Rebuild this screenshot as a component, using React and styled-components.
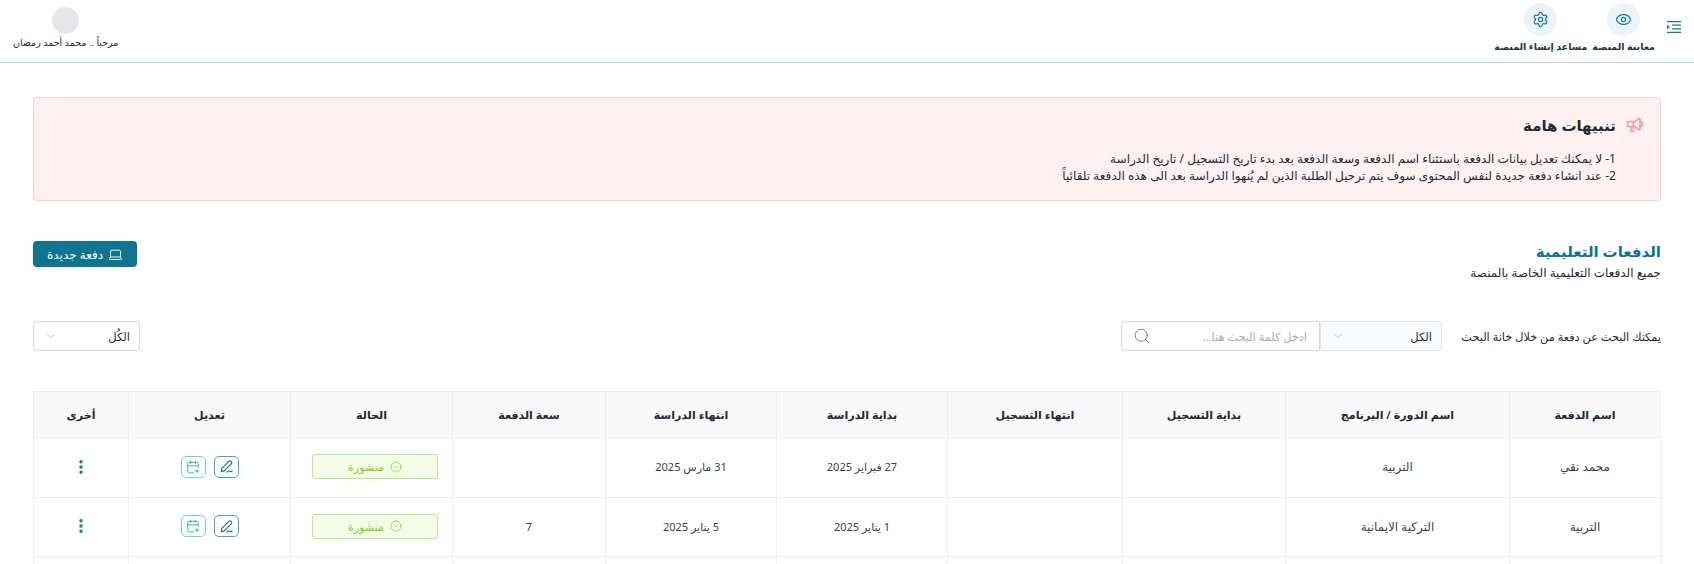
import React from "react";
import styled, { createGlobalStyle } from "styled-components";
import { Eye, Settings, Laptop, ChevronDown, Search, CalendarPlus, CircleCheck, EllipsisVertical } from "lucide-react";
import { TbSpeakerphone } from "react-icons/tb";

const GlobalStyle = createGlobalStyle`
  html, body {
    margin: 0;
    height: 564px;
    overflow: hidden;
    background: #fff;
  }
  body {
    direction: rtl;
    font-family: "Noto Sans", "DejaVu Sans", "Liberation Sans", sans-serif;
    color: #1f2937;
  }
`;

const columns = [
  { title: "اسم الدفعة", width: 151 },
  { title: "اسم الدورة / البرنامج", width: 224 },
  { title: "بداية التسجيل", width: 163 },
  { title: "انتهاء التسجيل", width: 175 },
  { title: "بداية الدراسة", width: 171 },
  { title: "انتهاء الدراسة", width: 171 },
  { title: "سعة الدفعة", width: 153 },
  { title: "الحالة", width: 162 },
  { title: "تعديل", width: 162 },
  { title: "أخرى", width: 95 },
];

const rows = [
  { name: "محمد نقي", course: "التربية", start: "27 فبراير 2025", end: "31 مارس 2025", seats: "", height: 60 },
  { name: "التربية", course: "التركية الايمانية", start: "1 يناير 2025", end: "5 يناير 2025", seats: "7", height: 59 },
];

function PenIcon() {
  return (
    <svg width="15" height="15" viewBox="0 0 16 16" fill="none" stroke="currentColor" strokeWidth="1.3" strokeLinecap="round" strokeLinejoin="round">
      <path d="M2.5 13.5 3 10l7.2-7.2c1-1 2-1 2.8-.2s.8 1.8-.2 2.8L5.6 12.6z" />
      <path d="M8.5 14c1.2-1.4 2-1.6 2.8-.8.7.7 1.4.6 2.7-.4" />
    </svg>
  );
}

function App() {
  return (
    <>
      <GlobalStyle />
      <TopBar>
        <TopActions>
          <MenuIcon viewBox="0 0 14 12">
            <path d="M0 .6h14M5 4.2h9M5 7.8h9M0 11.4h14" />
            <path d="M0 3.8 3 6 0 8.2z" className="fill" />
          </MenuIcon>
          <TopAction>
            <IconCircle><Eye size={17} strokeWidth={1.7} /></IconCircle>
            <TopLabel>معاينة المنصة</TopLabel>
          </TopAction>
          <TopAction>
            <IconCircle><Settings size={17} strokeWidth={1.7} /></IconCircle>
            <TopLabel>مساعد إنشاء المنصة</TopLabel>
          </TopAction>
        </TopActions>
        <UserBox>
          <Avatar />
          <UserName>مرحباً .. محمد أحمد رمضان</UserName>
        </UserBox>
      </TopBar>

      <Main>
        <Alert>
          <AlertHead>
            <TbSpeakerphone size={20} color="#f0a0a3" />
            <AlertTitle>تنبيهات هامة</AlertTitle>
          </AlertHead>
          <AlertLine>1- لا يمكنك تعديل بيانات الدفعة باستثناء اسم الدفعة وسعة الدفعة بعد بدء تاريخ التسجيل / تاريخ الدراسة</AlertLine>
          <AlertLine>2- عند انشاء دفعة جديدة لنفس المحتوى سوف يتم ترحيل الطلبة الذين لم يُنهوا الدراسة بعد الى هذه الدفعة تلقائياً</AlertLine>
        </Alert>

        <SectionHead>
          <div>
            <SectionTitle>الدفعات التعليمية</SectionTitle>
            <SectionSub>جميع الدفعات التعليمية الخاصة بالمنصة</SectionSub>
          </div>
          <NewButton>
            <Laptop size={15} strokeWidth={1.5} />
            دفعة جديدة
          </NewButton>
        </SectionHead>

        <FilterRow>
          <SearchGroup>
            <FilterLabel>يمكنك البحث عن دفعة من خلال خانة البحث</FilterLabel>
            <ScopeSelect>
              <span>الكل</span>
              <ChevronDown size={14} strokeWidth={1} color="#9ca3af" />
            </ScopeSelect>
            <SearchBox>
              <SearchText>ادخل كلمة البحث هنا...</SearchText>
              <Search size={18} strokeWidth={1.2} color="#6b7280" />
            </SearchBox>
          </SearchGroup>
          <StatusSelect>
            <span>الكُل</span>
            <ChevronDown size={14} strokeWidth={1} color="#9ca3af" />
          </StatusSelect>
        </FilterRow>

        <Table>
          <colgroup>
            {columns.map((c) => (
              <col key={c.title} width={c.width} />
            ))}
          </colgroup>
          <thead>
            <tr>
              {columns.map((c) => (
                <Th key={c.title}>{c.title}</Th>
              ))}
            </tr>
          </thead>
          <tbody>
            {rows.map((r) => (
              <Row key={r.name} $height={r.height}>
                <Td>{r.name}</Td>
                <Td>{r.course}</Td>
                <Td />
                <Td />
                <DateCell>{r.start}</DateCell>
                <DateCell>{r.end}</DateCell>
                <DateCell>{r.seats}</DateCell>
                <Td>
                  <StatusBadge>
                    <CircleCheck size={12} strokeWidth={1.4} />
                    منشورة
                  </StatusBadge>
                </Td>
                <Td>
                  <EditActions>
                    <IconButton $color="#14799b" $border="#4f9fb8">
                      <PenIcon />
                    </IconButton>
                    <IconButton $color="#13b998" $border="#6bd9c2">
                      <CalendarPlus size={14} strokeWidth={1.5} />
                    </IconButton>
                  </EditActions>
                </Td>
                <Td>
                  <MoreIcon><EllipsisVertical size={18} strokeWidth={2.6} /></MoreIcon>
                </Td>
              </Row>
            ))}
            <Row $height={60}>
              {columns.map((c) => (
                <Td key={c.title} />
              ))}
            </Row>
          </tbody>
        </Table>
      </Main>
    </>
  );
}

const TopBar = styled.header`
  display: flex;
  justify-content: space-between;
  height: 63px;
  box-sizing: border-box;
  padding: 0 13px;
  border-bottom: 1px solid #b9d5de;
`;

const TopActions = styled.div`
  display: flex;
  align-items: flex-start;
  gap: 5px;
`;

const MenuIcon = styled.svg`
  width: 14px;
  height: 12px;
  margin: 21px 0 0 7px;
  fill: none;
  stroke: #14799b;
  stroke-width: 1.2;
  .fill {
    fill: #14799b;
    stroke: none;
  }
`;

const TopAction = styled.div`
  display: flex;
  flex-direction: column;
  align-items: center;
  padding-top: 3px;
`;

const IconCircle = styled.div`
  width: 33px;
  height: 33px;
  border-radius: 50%;
  background: #edf4f7;
  color: #14799b;
  display: flex;
  align-items: center;
  justify-content: center;
`;

const TopLabel = styled.div`
  margin-top: 2px;
  font-size: 9.5px;
  font-weight: 700;
  line-height: 18px;
  color: #163a4a;
  white-space: nowrap;
`;

const UserBox = styled.div`
  display: flex;
  flex-direction: column;
  align-items: center;
  padding-top: 7px;
`;

const Avatar = styled.div`
  width: 27px;
  height: 27px;
  border-radius: 50%;
  background: #e5e7eb;
`;

const UserName = styled.div`
  font-size: 9.5px;
  line-height: 18px;
  color: #1f2937;
  white-space: nowrap;
`;

const Main = styled.main`
  padding: 34px 33px 0 33px;
`;

const Alert = styled.section`
  height: 104px;
  box-sizing: border-box;
  padding: 16px 15px 0 17px;
  background: #fff1f1;
  border: 1px solid #fecaca;
  border-radius: 4px;
`;

const AlertHead = styled.div`
  display: flex;
  align-items: center;
  gap: 9px;
  margin-bottom: 14px;
`;

const AlertTitle = styled.h2`
  margin: 0;
  font-size: 15px;
  font-weight: 700;
  line-height: 22px;
  color: #1f2937;
`;

const AlertLine = styled.p`
  margin: 0 29px 0 0;
  font-size: 12.1px;
  line-height: 17px;
  color: #1f2937;
`;

const SectionHead = styled.div`
  display: flex;
  justify-content: space-between;
  align-items: flex-start;
  margin-top: 40px;
`;

const SectionTitle = styled.h1`
  margin: 0;
  font-size: 15px;
  font-weight: 700;
  line-height: 21px;
  color: #0f7490;
`;

const SectionSub = styled.p`
  margin: 0;
  font-size: 12px;
  line-height: 21px;
  color: #1f2937;
`;

const NewButton = styled.button`
  display: flex;
  align-items: center;
  justify-content: center;
  gap: 5px;
  width: 104px;
  height: 26px;
  border: 0;
  border-radius: 4px;
  background: #0f7490;
  color: #fff;
  font: inherit;
  font-size: 12px;
`;

const FilterRow = styled.div`
  display: flex;
  justify-content: space-between;
  margin-top: 38px;
`;

const SearchGroup = styled.div`
  display: flex;
  align-items: center;
`;

const FilterLabel = styled.span`
  width: 219px;
  font-size: 11.3px;
  color: #1f2937;
`;

const ScopeSelect = styled.div`
  display: flex;
  align-items: center;
  justify-content: space-between;
  width: 122px;
  height: 30px;
  box-sizing: border-box;
  padding: 0 9px 0 10px;
  font-size: 11.5px;
  background: #f9fafb;
  border: 1px solid #e0e3e7;
  border-radius: 0 4px 4px 0;
`;

const SearchBox = styled.div`
  display: flex;
  align-items: center;
  justify-content: space-between;
  width: 199px;
  height: 30px;
  box-sizing: border-box;
  padding: 0 12px 0 11px;
  background: #fff;
  border: 1px solid #d4d7dc;
  border-radius: 4px 0 0 4px;
`;

const SearchText = styled.span`
  font-size: 11.3px;
  color: #a8adb5;
`;

const StatusSelect = styled(ScopeSelect)`
  width: 107px;
  background: #fff;
  border-color: #d4d7dc;
  border-radius: 4px;
`;

const Table = styled.table`
  width: 1627px;
  margin-top: 40px;
  table-layout: fixed;
  border-collapse: collapse;
  font-size: 12px;
`;

const Th = styled.th`
  height: 45px;
  padding: 0;
  font-size: 11.1px;
  font-weight: 600;
  color: #1f2937;
  background: #f9f9f9;
  border: 1px solid #eeeeee;
`;

const Row = styled.tr`
  height: ${(props) => props.$height}px;
`;

const Td = styled.td`
  padding: 0 0 2px;
  text-align: center;
  color: #374151;
  border: 1px solid #eeeeee;
`;

const DateCell = styled(Td)`
  font-size: 11px;
`;

const StatusBadge = styled.div`
  display: flex;
  align-items: center;
  justify-content: center;
  gap: 6px;
  width: 126px;
  height: 25px;
  margin: 0 14px 0 auto;
  box-sizing: border-box;
  font-size: 11px;
  color: #84cc16;
  background: #f3fde8;
  border: 1px solid #b4ea8c;
  border-radius: 3px;
`;

const EditActions = styled.div`
  display: flex;
  justify-content: center;
  gap: 8px;
`;

const IconButton = styled.div`
  display: flex;
  align-items: center;
  justify-content: center;
  width: 25px;
  height: 22px;
  box-sizing: border-box;
  color: ${(props) => props.$color};
  border: 1px solid ${(props) => props.$border};
  border-radius: 5px;
`;

const MoreIcon = styled.div`
  display: flex;
  justify-content: center;
  color: #14799b;
`;

export default App;
